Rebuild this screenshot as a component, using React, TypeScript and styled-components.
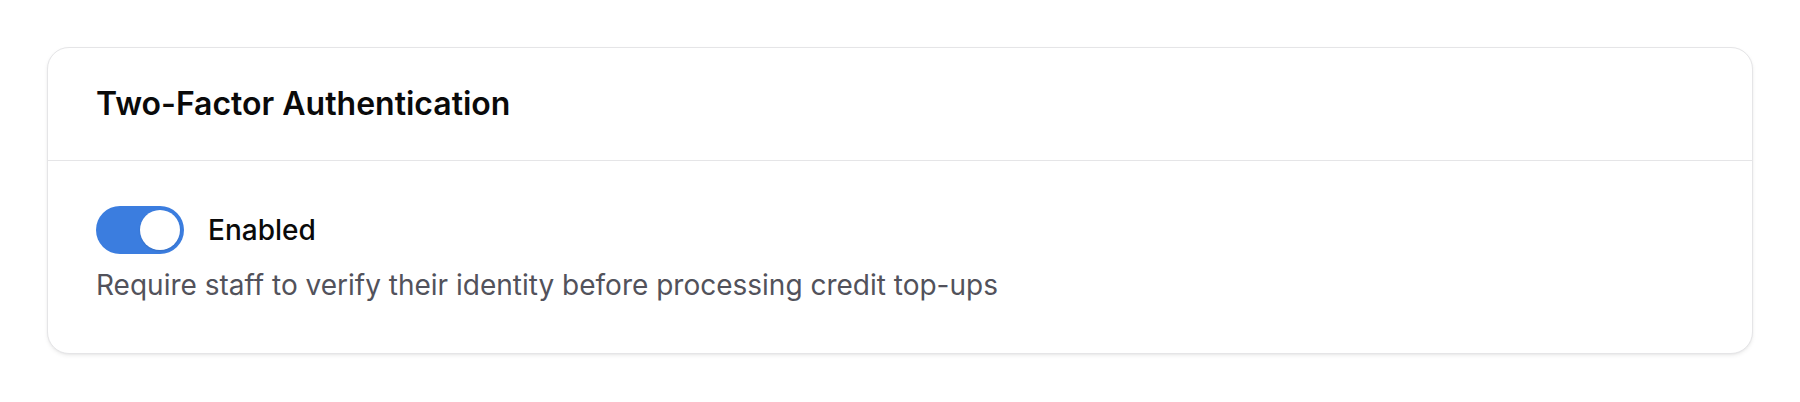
import React, { useState } from "react";
import styled, { createGlobalStyle } from "styled-components";

const GlobalStyle = createGlobalStyle`
  html, body {
    margin: 0;
    padding: 0;
    background: #ffffff;
    font-family: Inter, "Noto Sans", sans-serif;
    -webkit-font-smoothing: antialiased;
  }
  * { box-sizing: border-box; }
`;

const Page = styled.div`
  padding: 47px 47px;
`;

const Card = styled.section`
  background: #ffffff;
  border: 1px solid #e5e5e7;
  border-radius: 22px;
  box-shadow: 0 2px 4px rgba(0, 0, 0, 0.06), 0 1px 2px rgba(0, 0, 0, 0.04);
  overflow: hidden;
`;

const CardHeader = styled.header`
  display: flex;
  align-items: center;
  padding: 32px 48px;
  border-bottom: 1px solid #e5e5e7;
`;

const Title = styled.h2`
  margin: 0;
  font-size: 32px;
  line-height: 48px;
  font-weight: 600;
  color: #0a0a0a;
`;

const CardBody = styled.div`
  display: flex;
  flex-direction: column;
  gap: 11px;
  padding: 45px 48px 48px;
`;

const SwitchRow = styled.label`
  display: flex;
  align-items: center;
  gap: 24px;
  cursor: pointer;
`;

const Track = styled.button<{ $on: boolean }>`
  position: relative;
  width: 88px;
  height: 48px;
  padding: 0;
  border: none;
  border-radius: 999px;
  background: ${(p) => (p.$on ? "#3b7ddf" : "#d4d4d8")};
  cursor: pointer;
  flex-shrink: 0;
`;

const Knob = styled.span<{ $on: boolean }>`
  position: absolute;
  top: 4px;
  left: ${(p) => (p.$on ? "44px" : "4px")};
  width: 40px;
  height: 40px;
  border-radius: 50%;
  background: #ffffff;
  box-shadow: 0 1px 2px rgba(0, 0, 0, 0.12);
  transition: left 0.15s ease;
`;

const SwitchLabel = styled.span`
  font-size: 28px;
  line-height: 40px;
  font-weight: 500;
  color: #0a0a0a;
`;

const Description = styled.p`
  margin: 0;
  font-size: 28px;
  line-height: 40px;
  color: #52525b;
`;

export default function App() {
  const [enabled, setEnabled] = useState(true);
  return (
    <>
      <GlobalStyle />
      <Page>
        <Card>
          <CardHeader>
            <Title>Two-Factor Authentication</Title>
          </CardHeader>
          <CardBody>
            <SwitchRow>
              <Track
                type="button"
                role="switch"
                aria-checked={enabled}
                $on={enabled}
                onClick={() => setEnabled((v) => !v)}
              >
                <Knob $on={enabled} />
              </Track>
              <SwitchLabel>Enabled</SwitchLabel>
            </SwitchRow>
            <Description>
              Require staff to verify their identity before processing credit top-ups
            </Description>
          </CardBody>
        </Card>
      </Page>
    </>
  );
}
